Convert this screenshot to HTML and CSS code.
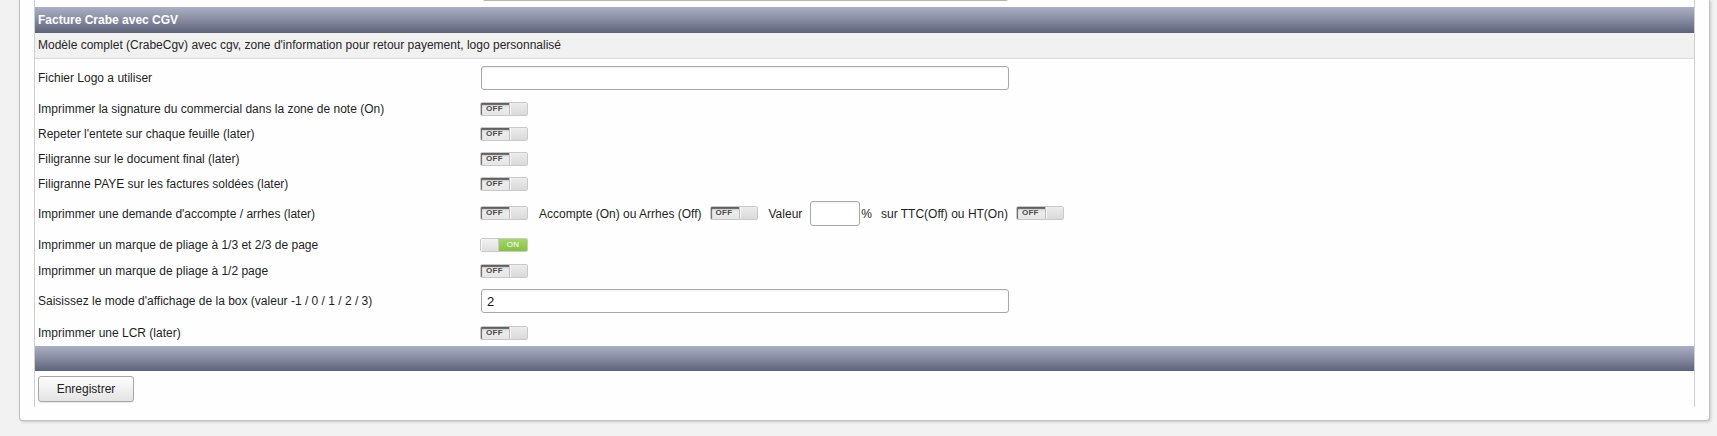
FILE: index.html
```html
<!DOCTYPE html>
<html lang="fr">
<head>
<meta charset="utf-8">
<title>Facture Crabe avec CGV</title>
<link rel="stylesheet" href="styles.css">
</head>
<body>
<div class="page">
  <div class="panel">
    <div class="prev"><div class="prev-input"></div></div>
    <div class="bar title">Facture Crabe avec CGV</div>
    <div class="desc">Modèle complet (CrabeCgv) avec cgv, zone d'information pour retour payement, logo personnalisé</div>

    <div class="row h37">
      <div class="label">Fichier Logo a utiliser</div>
      <div class="field"><input class="text wide" type="text" value=""></div>
    </div>
    <div class="row h25">
      <div class="label">Imprimmer la signature du commercial dans la zone de note (On)</div>
      <div class="field"><span class="switch off"><span class="lbl">OFF</span><span class="knob"></span></span></div>
    </div>
    <div class="row h25">
      <div class="label">Repeter l'entete sur chaque feuille (later)</div>
      <div class="field"><span class="switch off"><span class="lbl">OFF</span><span class="knob"></span></span></div>
    </div>
    <div class="row h25">
      <div class="label">Filigranne sur le document final (later)</div>
      <div class="field"><span class="switch off"><span class="lbl">OFF</span><span class="knob"></span></span></div>
    </div>
    <div class="row h25">
      <div class="label">Filigranne PAYE sur les factures soldées (later)</div>
      <div class="field"><span class="switch off"><span class="lbl">OFF</span><span class="knob"></span></span></div>
    </div>
    <div class="row h35">
      <div class="label">Imprimmer une demande d'accompte / arrhes (later)</div>
      <div class="field inline">
        <span class="switch off raised"><span class="lbl">OFF</span><span class="knob"></span></span>
        <span class="txt gap11">Accompte (On) ou Arrhes (Off)</span>
        <span class="switch off raised gap8"><span class="lbl">OFF</span><span class="knob"></span></span>
        <span class="txt gap11">Valeur</span>
        <input class="text small gap8" type="text" value="">
        <span class="txt gap1">%</span>
        <span class="txt gap9">sur TTC(Off) ou HT(On)</span>
        <span class="switch off raised gap8"><span class="lbl">OFF</span><span class="knob"></span></span>
      </div>
    </div>
    <div class="row h28">
      <div class="label">Imprimmer un marque de pliage à 1/3 et 2/3 de page</div>
      <div class="field"><span class="switch on"><span class="knob"></span><span class="lbl">ON</span></span></div>
    </div>
    <div class="row h23">
      <div class="label">Imprimmer un marque de pliage à 1/2 page</div>
      <div class="field"><span class="switch off"><span class="lbl">OFF</span><span class="knob"></span></span></div>
    </div>
    <div class="row h38">
      <div class="label">Saisissez le mode d'affichage de la box (valeur -1 / 0 / 1 / 2 / 3)</div>
      <div class="field"><input class="text wide" type="text" value="2"></div>
    </div>
    <div class="row h26">
      <div class="label">Imprimmer une LCR (later)</div>
      <div class="field"><span class="switch off"><span class="lbl">OFF</span><span class="knob"></span></span></div>
    </div>
    <div class="bar footer"></div>
    <div class="actions"><button class="btn" type="button">Enregistrer</button></div>
  </div>
</div>
</body>
</html>
```
FILE: styles.css
```css
html, body {
  margin: 0;
  padding: 0;
}
body {
  background: #f2f2f2;
  font-family: "Liberation Sans", Arial, sans-serif;
  font-size: 12px;
  color: #222;
  height: 436px;
  overflow: hidden;
}
.page {
  margin-left: 19px;
  width: 1691px;
  box-sizing: border-box;
  background: #fefefe;
  border: 1px solid #c2c2c2;
  border-top: none;
  border-radius: 0 0 4px 4px;
  box-shadow: 1px 1px 3px rgba(0, 0, 0, 0.18);
  padding: 0 14px 13px 14px;
}
.panel {
  border-left: 1px solid #cfcfcf;
  border-right: 1px solid #cfcfcf;
  background: #fefefe;
}
.prev {
  height: 7px;
  overflow: hidden;
}
.prev-input {
  margin-left: 447px;
  width: 527px;
  height: 24px;
  margin-top: -23px;
  border: 1px solid #b5b5b5;
  border-radius: 3px;
  box-sizing: border-box;
}
.bar {
  height: 26px;
  background: linear-gradient(to bottom, #abafc3 0%, #8a8fa5 45%, #5c6277 100%);
  box-sizing: border-box;
}
.title {
  color: #fff;
  font-weight: bold;
  font-size: 12px;
  line-height: 26px;
  padding-left: 3px;
}
.footer {
  height: 25px;
}
.desc {
  height: 26px;
  box-sizing: border-box;
  line-height: 25px;
  background: #f1f1f1;
  border-bottom: 1px solid #dadada;
  padding-left: 3px;
  color: #262626;
}
.row {
  display: grid;
  grid-template-columns: 445px 1fr;
  align-items: center;
}
.h23 { height: 23px; }
.h25 { height: 25px; }
.h26 { height: 26px; }
.h28 { height: 28px; }
.h35 { height: 35px; }
.h37 { height: 37px; }
.h38 { height: 38px; }
.label {
  padding-left: 3px;
  color: #1e1e1e;
}
.field {
  display: flex;
  align-items: center;
}
.text {
  box-sizing: border-box;
  height: 24px;
  border: 1px solid #a9a9a9;
  border-radius: 3px;
  background: #fff;
  box-shadow: inset 0 1px 2px rgba(0, 0, 0, 0.06);
  font-family: "Liberation Sans", Arial, sans-serif;
  font-size: 13px;
  color: #111;
  padding: 0 5px;
  margin: 0 0 0 1px;
  outline: none;
}
.wide {
  width: 528px;
}
.small {
  width: 50px;
  height: 25px;
}
.txt {
  white-space: nowrap;
  color: #1e1e1e;
}
.gap1 { margin-left: 1px; }
.gap8 { margin-left: 8px; }
.gap9 { margin-left: 9px; }
.gap11 { margin-left: 11px; }
.switch {
  display: inline-flex;
  width: 48px;
  height: 14px;
  box-sizing: border-box;
  border: 1px solid #c9c9c9;
  border-radius: 2px;
  overflow: hidden;
  flex: none;
}
.switch.raised {
  margin-bottom: 2px;
}
.switch .lbl {
  width: 28px;
  font-size: 8px;
  font-weight: bold;
  line-height: 12px;
  letter-spacing: 0.3px;
}
.switch.off .lbl {
  background: linear-gradient(to bottom, #d2d2d2, #ececec 40%, #e6e6e6);
  box-shadow: inset 1px 2px 1px rgba(0, 0, 0, 0.55);
  color: #4a4a4a;
  padding-left: 5px;
  box-sizing: border-box;
}
.switch .knob {
  flex: 1;
  background: linear-gradient(to bottom, #ececec, #d9d9d9);
  border-left: 1px solid #bdbdbd;
  box-shadow: inset 1px 0 0 #f8f8f8;
}
.switch.on .knob {
  border-left: none;
  border-right: 1px solid #c8c8c8;
  background: linear-gradient(to bottom, #f2f2f2, #dedede);
}
.switch.on .lbl {
  background: linear-gradient(to bottom, #a4d66a, #86c13f);
  color: #fff;
  font-weight: normal;
  text-align: center;
}
.actions {
  height: 36px;
  padding-top: 5px;
  padding-left: 3px;
  box-sizing: border-box;
}
.btn {
  width: 96px;
  height: 26px;
  border: 1px solid #a6a6a6;
  border-radius: 3px;
  background: linear-gradient(to bottom, #fdfdfd, #e4e4e4);
  box-shadow: 0 1px 1px rgba(0, 0, 0, 0.08);
  font-family: "Liberation Sans", Arial, sans-serif;
  font-size: 12px;
  color: #222;
  padding: 0;
  cursor: pointer;
}
```
